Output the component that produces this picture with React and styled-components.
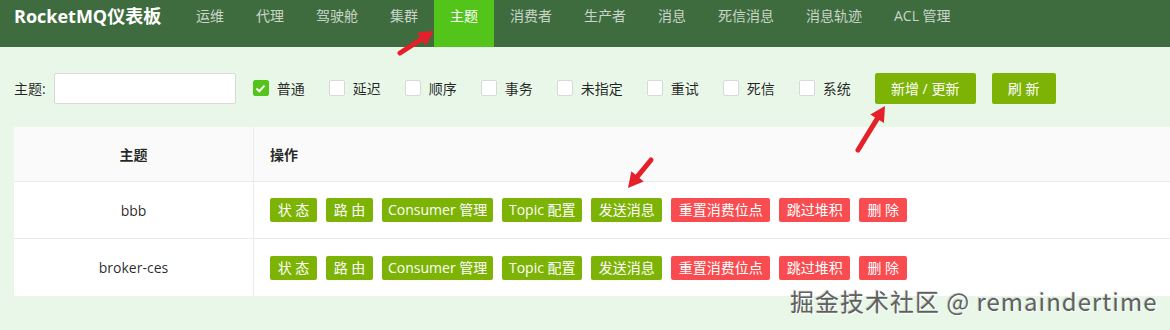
import React from 'react';
import styled, { createGlobalStyle } from 'styled-components';

const Global = createGlobalStyle`
  html, body { margin: 0; padding: 0; background: #e9f7e9; }
  body {
    font-family: "Open Sans", "Noto Sans CJK SC", sans-serif;
    font-size: 14px;
    color: rgba(0, 0, 0, 0.85);
  }
  * { box-sizing: border-box; }
`;

const Page = styled.div`
  position: relative;
  width: 1170px;
  height: 330px;
  overflow: hidden;
  background: #e9f7e9;
`;

const NavBar = styled.header`
  display: flex;
  height: 47px;
  background: #3f6c3f;
`;

const Brand = styled.div`
  width: 180px;
  padding-left: 14px;
  color: #fff;
  font-weight: 700;
  font-size: 18px;
  line-height: 33px;
  white-space: nowrap;
`;

const Menu = styled.nav`
  display: flex;
`;

const MenuItem = styled.a`
  display: block;
  height: 47px;
  padding: 0 16px;
  line-height: 32px;
  font-size: 14px;
  white-space: nowrap;
  color: ${p => (p.$active ? '#ffffff' : 'rgba(255,255,255,0.72)')};
  background: ${p => (p.$active ? '#52c41a' : 'transparent')};
`;

const FilterBar = styled.div`
  display: flex;
  align-items: center;
  height: 80px;
  padding: 2px 14px 0;
`;

const Label = styled.span`
  font-size: 14px;
  color: rgba(0, 0, 0, 0.85);
  margin-right: 8px;
`;

const TextInput = styled.input`
  width: 182px;
  height: 31px;
  border: 1px solid #d9d9d9;
  border-radius: 2px;
  background: #fff;
  margin-right: 17px;
  outline: none;
`;

const CheckItem = styled.label`
  display: flex;
  align-items: center;
  gap: 8px;
  margin-right: 24px;
  font-size: 14px;
  white-space: nowrap;
`;

const Box = styled.span`
  width: 16px;
  height: 16px;
  border-radius: 2px;
  border: 1px solid ${p => (p.$checked ? '#52c41a' : '#d9d9d9')};
  background: ${p => (p.$checked ? '#52c41a' : '#fff')};
  display: flex;
  align-items: center;
  justify-content: center;
`;

const ToolButton = styled.button`
  height: 31px;
  padding: 0 15px;
  margin-right: 16px;
  border: none;
  border-radius: 2px;
  background: #7cb305;
  color: #fff;
  font-family: inherit;
  font-size: 14px;
  white-space: nowrap;
  min-width: ${p => p.$min || 0}px;
`;

const Table = styled.div`
  margin-left: 14px;
  background: #fff;
`;

const Row = styled.div`
  display: flex;
  height: ${p => (p.$head ? 55 : 57)}px;
  background: ${p => (p.$head ? '#fafafa' : '#fff')};
  border-bottom: 1px solid #ebebeb;
  &:last-child { border-bottom: none; }
`;

const NameCell = styled.div`
  width: 240px;
  display: flex;
  align-items: center;
  justify-content: center;
  border-right: 1px solid #ebebeb;
  font-weight: ${p => (p.$head ? 700 : 400)};
  font-size: 14px;
`;

const OpsCell = styled.div`
  flex: 1;
  display: flex;
  align-items: center;
  gap: 9px;
  padding-left: 16px;
  font-weight: ${p => (p.$head ? 700 : 400)};
`;

const ActionButton = styled.button`
  height: 24px;
  padding: 0 6px;
  border: none;
  border-radius: 2px;
  background: ${p => (p.$danger ? '#f94c50' : '#7cb305')};
  color: #fff;
  font-family: inherit;
  font-size: 14px;
  line-height: 24px;
  white-space: nowrap;
  min-width: ${p => p.$min || 0}px;
`;

const Overlay = styled.svg`
  position: absolute;
  left: 0;
  top: 0;
  pointer-events: none;
`;

const Watermark = styled.div`
  position: absolute;
  left: 790px;
  top: 285px;
  font-family: "Noto Sans CJK SC", sans-serif;
  font-size: 24px;
  line-height: 32px;
  color: rgba(70, 70, 70, 0.85);
  text-shadow: 1px 1px 0 rgba(255, 255, 255, 0.9), -1px -1px 0 rgba(0, 0, 0, 0.15);
  white-space: nowrap;
  letter-spacing: 1px;
`;

const navItems = ['运维', '代理', '驾驶舱', '集群', '主题', '消费者', '生产者', '消息', '死信消息', '消息轨迹', 'ACL 管理'];
const types = [
  ['普通', true], ['延迟'], ['顺序'], ['事务'], ['未指定'], ['重试'], ['死信'], ['系统'],
];
const actions = [
  ['状 态', false, 47], ['路 由', false, 47], ['Consumer 管理', false, 109], ['Topic 配置', false, 80], ['发送消息', false, 71],
  ['重置消费位点', true, 99], ['跳过堆积', true, 71], ['删 除', true, 48],
];
const topics = ['bbb', 'broker-ces'];

function Arrow({ x1, y1, x2, y2 }) {
  const dx = x2 - x1;
  const dy = y2 - y1;
  const len = Math.hypot(dx, dy);
  const ux = dx / len;
  const uy = dy / len;
  const head = 15;
  const half = 8;
  const bx = x2 - ux * head;
  const by = y2 - uy * head;
  const pts = `${x2},${y2} ${bx - uy * half},${by + ux * half} ${bx + uy * half},${by - ux * half}`;
  return (
    <g>
      <line x1={x1} y1={y1} x2={bx + ux * 2} y2={by + uy * 2} stroke="#e5202b" strokeWidth="5" strokeLinecap="round" />
      <polygon points={pts} fill="#e5202b" />
    </g>
  );
}

export default function App() {
  return (
    <Page>
      <Global />
      <NavBar>
        <Brand>RocketMQ仪表板</Brand>
        <Menu>
          {navItems.map(n => (
            <MenuItem key={n} $active={n === '主题'}>{n}</MenuItem>
          ))}
        </Menu>
      </NavBar>
      <FilterBar>
        <Label>主题:</Label>
        <TextInput />
        {types.map(([t, c]) => (
          <CheckItem key={t}>
            <Box $checked={c}>
              {c && (
                <svg width="11" height="9" viewBox="0 0 11 9">
                  <path d="M1.5 4.5 L4.3 7.2 L9.5 1.6" fill="none" stroke="#fff" strokeWidth="2" />
                </svg>
              )}
            </Box>
            {t}
          </CheckItem>
        ))}
        <ToolButton $min={101}>新增 / 更新</ToolButton>
        <ToolButton $min={64}>刷 新</ToolButton>
      </FilterBar>
      <Table>
        <Row $head>
          <NameCell $head>主题</NameCell>
          <OpsCell $head>操作</OpsCell>
        </Row>
        {topics.map(t => (
          <Row key={t}>
            <NameCell>{t}</NameCell>
            <OpsCell>
              {actions.map(([a, d, w]) => (
                <ActionButton key={a} $danger={d} $min={w}>{a}</ActionButton>
              ))}
            </OpsCell>
          </Row>
        ))}
      </Table>
      <Overlay width="1170" height="330">
        <Arrow x1={400} y1={53} x2={434} y2={31} />
        <Arrow x1={651} y1={160} x2={628} y2={188} />
        <Arrow x1={858} y1={150} x2={885} y2={106} />
      </Overlay>
      <Watermark>掘金技术社区 @ remaindertime</Watermark>
    </Page>
  );
}
